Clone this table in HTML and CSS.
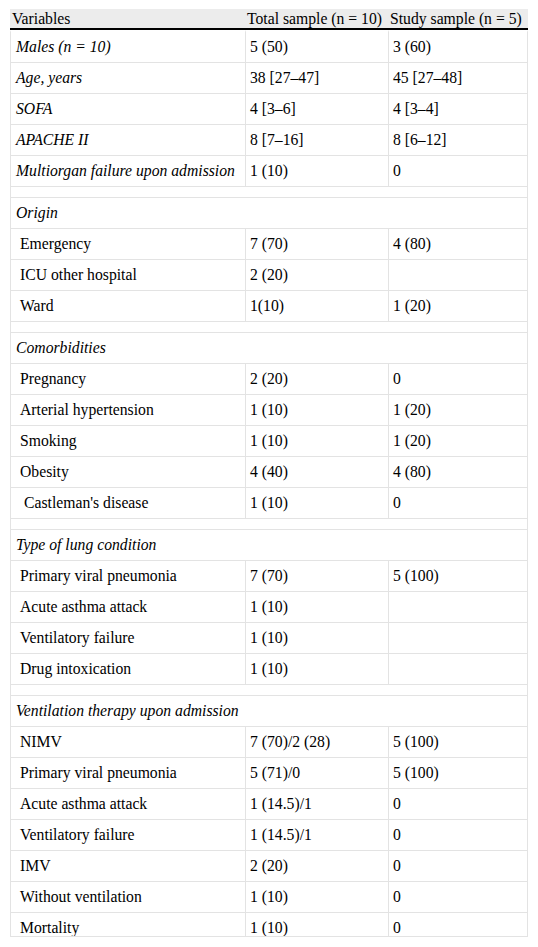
FILE: index.html
```html
<!DOCTYPE html>
<html>
<head>
<meta charset="utf-8">
<link rel="stylesheet" href="styles.css">
</head>
<body>
<div class="wrap">
<table class="tbl">
<colgroup><col class="c1"><col class="c2"><col class="c3"></colgroup>
<thead>
<tr><th>Variables</th><th>Total sample (n = 10)</th><th>Study sample (n = 5)</th></tr>
</thead>
<tbody>
<tr class="first"><td class="it">Males (n = 10)</td><td>5 (50)</td><td>3 (60)</td></tr>
<tr><td class="it">Age, years</td><td>38 [27–47]</td><td>45 [27–48]</td></tr>
<tr><td class="it">SOFA</td><td>4 [3–6]</td><td>4 [3–4]</td></tr>
<tr><td class="it">APACHE II</td><td>8 [7–16]</td><td>8 [6–12]</td></tr>
<tr><td class="it">Multiorgan failure upon admission</td><td>1 (10)</td><td>0</td></tr>
<tr class="sp"><td colspan="3"></td></tr>
<tr><td colspan="3" class="it">Origin</td></tr>
<tr><td class="sub">Emergency</td><td>7 (70)</td><td>4 (80)</td></tr>
<tr><td class="sub">ICU other hospital</td><td>2 (20)</td><td></td></tr>
<tr><td class="sub">Ward</td><td>1(10)</td><td>1 (20)</td></tr>
<tr class="sp"><td colspan="3"></td></tr>
<tr><td colspan="3" class="it">Comorbidities</td></tr>
<tr><td class="sub">Pregnancy</td><td>2 (20)</td><td>0</td></tr>
<tr><td class="sub">Arterial hypertension</td><td>1 (10)</td><td>1 (20)</td></tr>
<tr><td class="sub">Smoking</td><td>1 (10)</td><td>1 (20)</td></tr>
<tr><td class="sub">Obesity</td><td>4 (40)</td><td>4 (80)</td></tr>
<tr><td class="sub2">Castleman's disease</td><td>1 (10)</td><td>0</td></tr>
<tr class="sp"><td colspan="3"></td></tr>
<tr><td colspan="3" class="it">Type of lung condition</td></tr>
<tr><td class="sub">Primary viral pneumonia</td><td>7 (70)</td><td>5 (100)</td></tr>
<tr><td class="sub">Acute asthma attack</td><td>1 (10)</td><td></td></tr>
<tr><td class="sub">Ventilatory failure</td><td>1 (10)</td><td></td></tr>
<tr><td class="sub">Drug intoxication</td><td>1 (10)</td><td></td></tr>
<tr class="sp"><td colspan="3"></td></tr>
<tr><td colspan="3" class="it">Ventilation therapy upon admission</td></tr>
<tr><td class="sub">NIMV</td><td>7 (70)/2 (28)</td><td>5 (100)</td></tr>
<tr><td class="sub">Primary viral pneumonia</td><td>5 (71)/0</td><td>5 (100)</td></tr>
<tr><td class="sub">Acute asthma attack</td><td>1 (14.5)/1</td><td>0</td></tr>
<tr><td class="sub">Ventilatory failure</td><td>1 (14.5)/1</td><td>0</td></tr>
<tr><td class="sub">IMV</td><td>2 (20)</td><td>0</td></tr>
<tr><td class="sub">Without ventilation</td><td>1 (10)</td><td>0</td></tr>
<tr><td class="sub">Mortality</td><td>1 (10)</td><td>0</td></tr>
</tbody>
</table>
</div>
</body>
</html>
```
FILE: styles.css
```css
html, body {
  margin: 0;
  padding: 0;
  background: #fff;
}
body {
  padding: 9px 10px 0 10px;
  font-family: "Liberation Serif", "Times New Roman", serif;
  font-size: 15.7px;
  color: #000;
}
.wrap {
  width: 518px;
  height: 927px;
  overflow: hidden;
  border-bottom: 1px solid #e3e3e3;
}
.tbl {
  border-collapse: separate;
  border-spacing: 0;
  table-layout: fixed;
  width: 518px;
}
.c1 { width: 235px; }
.c2 { width: 143px; }
.c3 { width: 140px; }
.tbl th {
  background: #ececec;
  font-weight: normal;
  text-align: left;
  height: 19px;
  padding: 0 0 0 2px;
  line-height: 19px;
  border-bottom: 2px solid #000;
  white-space: nowrap;
}
.tbl td {
  height: 30px;
  padding: 0 0 0 4px;
  line-height: 18px;
  border-left: 1px solid #e3e3e3;
  border-bottom: 1px solid #e3e3e3;
  vertical-align: middle;
  white-space: nowrap;
}
.tbl td:last-child {
  border-right: 1px solid #e3e3e3;
}
.tbl tr.first td {
  border-top: 2px solid #fff;
}
.tbl tr.sp td {
  height: 10px;
}
.it { font-style: italic; }
.tbl td.it { padding-left: 5px; }
.tbl td.sub { padding-left: 9px; }
.tbl td.sub2 { padding-left: 13px; }
```
